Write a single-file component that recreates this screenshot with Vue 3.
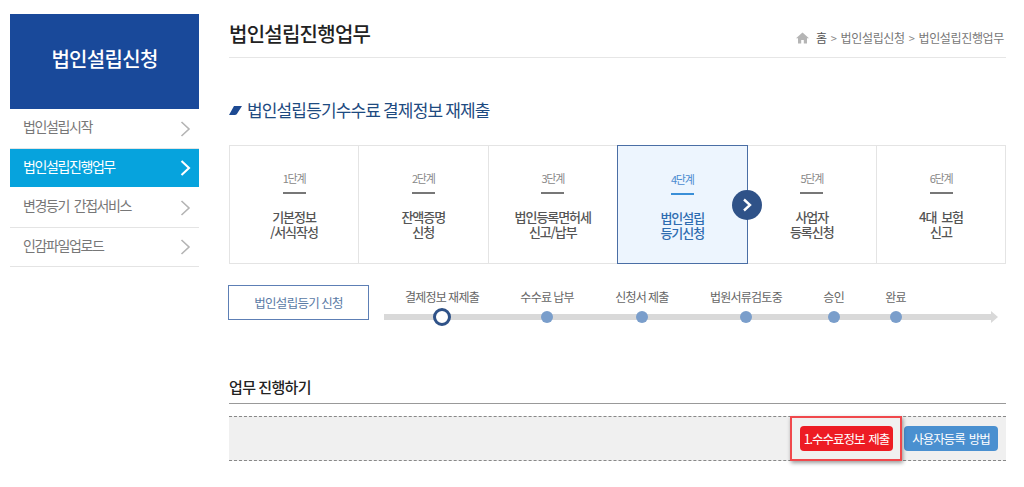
<script setup>
const menu = [
  { label: '법인설립시작' },
  { label: '법인설립진행업무', active: true },
  { label: '변경등기 간접서비스' },
  { label: '인감파일업로드' },
]
const steps = [
  { no: '1단계', lines: ['기본정보', '/서식작성'] },
  { no: '2단계', lines: ['잔액증명', '신청'] },
  { no: '3단계', lines: ['법인등록면허세', '신고/납부'] },
  { no: '4단계', lines: ['법인설립', '등기신청'], active: true },
  { no: '5단계', lines: ['사업자', '등록신청'] },
  { no: '6단계', lines: ['4대 보험', '신고'] },
]
const stages = [
  { label: '결제정보 재제출', current: true },
  { label: '수수료 납부' },
  { label: '신청서 제출' },
  { label: '법원서류검토중' },
  { label: '승인' },
  { label: '완료' },
]
</script>

<template>
  <div class="page">
    <aside class="side">
      <h2 class="side-title">법인설립신청</h2>
      <ul class="menu">
        <li v-for="m in menu" :key="m.label" class="menu-item" :class="{ on: m.active }">
          <span class="menu-label">{{ m.label }}</span>
          <svg class="chev" width="12" height="18" viewBox="0 0 12 18" fill="none">
            <path d="M2.5 2l7.5 7-7.5 7" stroke="currentColor" stroke-width="1.6" />
          </svg>
        </li>
      </ul>
    </aside>

    <main class="main">
      <header class="top">
        <h1 class="title">법인설립진행업무</h1>
        <nav class="crumbs">
          <svg width="13" height="12" viewBox="0 0 13 12" class="home">
            <path d="M6.5 0.5L0 6.2h2V11.5h3.2V8h2.6v3.5H11V6.2h2z" fill="#b5b5b5" />
          </svg>
          <span class="c-home">홈</span>
          <span class="sep">&gt;</span>
          <span>법인설립신청</span>
          <span class="sep">&gt;</span>
          <span>법인설립진행업무</span>
        </nav>
      </header>

      <h3 class="section">
        <svg width="13" height="9" viewBox="0 0 13 9" class="mark">
          <path d="M5 0H13L8.5 7C8 8.2 7 9 6 9H0z" fill="#1d4a92" />
        </svg>
        법인설립등기수수료 결제정보 재제출
      </h3>

      <ol class="steps">
        <li v-for="s in steps" :key="s.no" class="step" :class="{ on: s.active }">
          <span class="step-no">{{ s.no }}</span>
          <span class="step-rule"></span>
          <strong class="step-name">{{ s.lines[0] }}<br />{{ s.lines[1] }}</strong>
          <span v-if="s.active" class="next">
            <svg width="12" height="14" viewBox="0 0 12 14" fill="none">
              <path d="M3 1.5L9 7l-6 5.5" stroke="#fff" stroke-width="2.4" />
            </svg>
          </span>
        </li>
      </ol>

      <div class="progress">
        <div class="tag">법인설립등기 신청</div>
        <div class="line">
          <div v-for="st in stages" :key="st.label" class="stage">
            <span class="stage-label">{{ st.label }}</span>
            <span class="dot" :class="{ cur: st.current }"></span>
          </div>
        </div>
      </div>

      <h3 class="work">업무 진행하기</h3>
      <div class="actions">
        <span class="callout">
          <button class="btn red">1.수수료정보 제출</button>
        </span>
        <button class="btn blue">사용자등록 방법</button>
      </div>
    </main>
  </div>
</template>

<style>
html, body { margin: 0; background: #fff; }
</style>

<style scoped>
* { box-sizing: border-box; }
.page {
  width: 1024px;
  height: 487px;
  overflow: hidden;
  display: flex;
  align-items: flex-start;
  padding: 14px 18px 0 10px;
  gap: 30px;
  font-family: "Noto Sans CJK KR", "Noto Sans", sans-serif;
  color: #666;
}
.side { width: 189px; flex: none; }
.side-title {
  margin: 0;
  height: 95px;
  padding-bottom: 6px;
  display: flex;
  align-items: center;
  justify-content: center;
  background: #19499a;
  color: #fff;
  font-size: 20px;
  font-weight: 500;
  letter-spacing: -0.7px;
}
.menu { list-style: none; margin: 0; padding: 0; }
.menu-item {
  height: 39.5px;
  display: flex;
  align-items: center;
  justify-content: space-between;
  padding: 0 8px 0 13px;
  font-size: 14px;
  letter-spacing: -1.4px;
  word-spacing: 3px;
  color: #777;
  border-bottom: 1px solid #e4e4e4;
}
.menu-label { margin-top: -4px; }
.menu-item .chev { color: #b4b4b4; margin-top: 1px; }
.menu-item.on { background: #06a3dd; color: #fff; border-bottom-color: #fff; }
.menu-item.on .chev { color: #fff; margin-top: 0; }
.menu-item.on .chev path { stroke-width: 2.1; }

.main { flex: 1; min-width: 0; }
.top {
  height: 44px;
  display: flex;
  align-items: flex-start;
  justify-content: space-between;
  border-bottom: 1px solid #e6e6e6;
}
.title {
  margin: 5px 0 0;
  font-size: 20px;
  line-height: 30px;
  font-weight: 500;
  letter-spacing: -0.75px;
  color: #222;
}
.crumbs {
  margin: 15px 2px 0 0;
  display: flex;
  align-items: center;
  font-size: 12px;
  line-height: 18px;
  letter-spacing: -0.35px;
  color: #777;
}
.home { margin-right: 7px; }
.c-home { color: #555; }
.sep { margin: 0 4px; font-size: 11px; color: #888; }
.section {
  margin: 38px 0 0;
  height: 26px;
  display: flex;
  align-items: center;
  gap: 5px;
  font-size: 17px;
  font-weight: 400;
  letter-spacing: -0.85px;
  color: #1d4a80;
}
.mark { margin-top: 3px; }
.steps {
  list-style: none;
  margin: 23px 0 0;
  padding: 0;
  display: grid;
  grid-template-columns: 129px repeat(4, 129.5px) 1fr;
  height: 119px;
  border: 1px solid #e4e4e4;
}
.step {
  position: relative;
  display: flex;
  flex-direction: column;
  align-items: center;
  padding-top: 25px;
  border-right: 1px solid #e4e4e4;
}
.step:last-child { border-right: 0; }
.step-no { font-size: 11px; line-height: 14px; letter-spacing: -1.2px; color: #888; }
.step-rule { width: 23px; height: 2px; margin-top: 7px; background: #777; }
.step-name {
  margin-top: 15px;
  font-size: 13px;
  line-height: 15px;
  font-weight: 500;
  letter-spacing: -1.05px;
  word-spacing: 3px;
  text-align: center;
  color: #555;
}
.step.on {
  margin: -1px 0 -1px -1px;
  padding-top: 26px;
  background: #edf5fe;
  border: 1px solid #4a6ea5;
}
.step.on .step-no { color: #4a8ad0; }
.step.on .step-rule { background: #3a8fd8; }
.step.on .step-name { color: #2e6cb0; }
.next {
  position: absolute;
  right: -15px;
  top: 44px;
  width: 30px;
  height: 30px;
  border-radius: 50%;
  background: #2f5288;
  display: flex;
  align-items: center;
  justify-content: center;
  z-index: 1;
}
.progress {
  margin-top: 21px;
  display: flex;
  align-items: flex-start;
  gap: 15px;
}
.tag {
  width: 141px;
  height: 35px;
  margin-left: -1px;
  flex: none;
  border: 1px solid #5d7fb5;
  display: flex;
  align-items: center;
  justify-content: center;
  font-size: 12.5px;
  letter-spacing: -0.7px;
  color: #5a7aa5;
}
.line {
  position: relative;
  width: 607px;
  display: flex;
  gap: 41.4px;
  padding-left: 21px;
  margin-top: 3px;
}
.line::before {
  content: "";
  position: absolute;
  left: 0;
  right: 0;
  bottom: 3px;
  height: 6px;
  background: #d9d9d9;
}
.line::after {
  content: "";
  position: absolute;
  right: -7px;
  bottom: 0;
  border-left: 7px solid #d9d9d9;
  border-top: 6px solid transparent;
  border-bottom: 6px solid transparent;
}
.stage {
  position: relative;
  z-index: 1;
  display: flex;
  flex-direction: column;
  align-items: center;
  gap: 5px;
}
.stage-label {
  font-size: 12px;
  line-height: 18px;
  letter-spacing: -0.75px;
  white-space: nowrap;
  color: #666;
}
.dot {
  width: 12px;
  height: 12px;
  border-radius: 50%;
  background: #7a9ecb;
}
.dot.cur {
  width: 18px;
  height: 18px;
  margin: -3px 0;
  background: #fff;
  border: 3.5px solid #2f5288;
}
.work {
  margin: 53px 0 0;
  height: 28px;
  padding-bottom: 7px;
  display: flex;
  align-items: center;
  border-bottom: 1px solid #999;
  font-size: 15px;
  font-weight: 500;
  letter-spacing: -0.6px;
  color: #222;
}
.actions {
  margin-top: 12px;
  height: 45px;
  display: flex;
  align-items: center;
  justify-content: flex-end;
  padding-right: 8px;
  gap: 11px;
  background: #f0f0f0;
  border-top: 1px dashed #888;
  border-bottom: 1px dashed #888;
}
.btn {
  height: 25px;
  border: 0;
  border-radius: 4px;
  font-family: inherit;
  font-size: 12.5px;
  letter-spacing: -1px;
  word-spacing: 2px;
  color: #fff;
  padding: 0;
  display: block;
}
.red { width: 93px; background: #ed1c24; }
.blue { width: 94px; background: #4a90d0; }
.callout { position: relative; display: block; }
.callout::after {
  content: "";
  position: absolute;
  inset: -10px -9px -10px -10px;
  border: 2.5px solid #f0484c;
  box-shadow: 1px 2px 4px rgba(0, 0, 0, 0.4);
  pointer-events: none;
}
</style>
